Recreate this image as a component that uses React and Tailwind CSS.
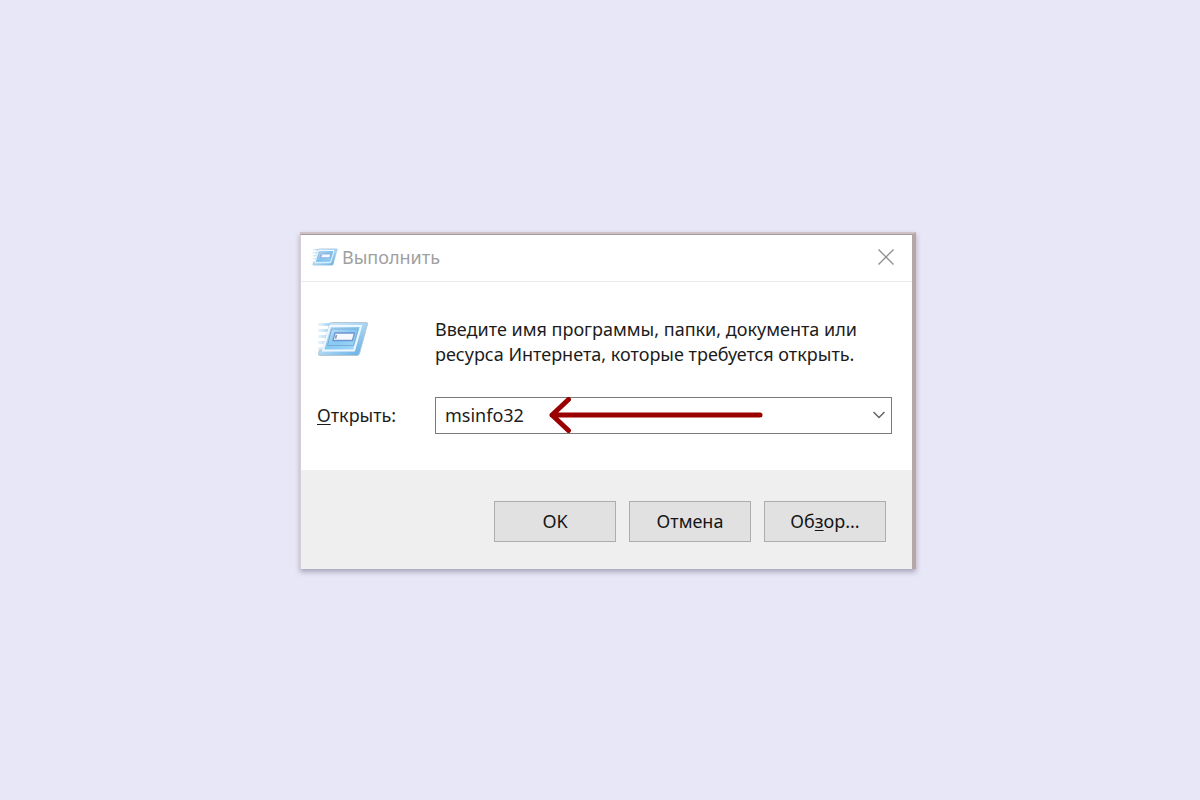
import React, { useState } from "react";

function RunIcon({ className, id }) {
  return (
    <svg className={className} viewBox="0 0 52 36" aria-hidden="true">
      <defs>
        <linearGradient id={`${id}-frame`} x1="0" y1="0" x2="1" y2="1">
          <stop offset="0" stopColor="#d9ebf8" />
          <stop offset="0.5" stopColor="#a9d5f4" />
          <stop offset="1" stopColor="#5aa9e2" />
        </linearGradient>
        <linearGradient id={`${id}-panel`} x1="0" y1="0" x2="1" y2="1">
          <stop offset="0" stopColor="#cfe5f6" />
          <stop offset="0.5" stopColor="#86c8f4" />
          <stop offset="1" stopColor="#aadcfb" />
        </linearGradient>
        <linearGradient id={`${id}-trail`} x1="0" y1="0" x2="1" y2="0">
          <stop offset="0" stopColor="#9fd0f3" stopOpacity="0.2" />
          <stop offset="1" stopColor="#8cc4ee" />
        </linearGradient>
      </defs>
      <g fill={`url(#${id}-trail)`}>
        <path d="M1 2h15v3H1zM1 8h13v3H1zM1 14h11v3H1zM1 20h9v3H1zM1 26h7v3H1z" />
      </g>
      <path
        d="M14.500 1.500H49.500Q51 1.500 50.500 3L42.500 32.500Q42 34.500 40 34.500H3Q1 34.500 1.500 32.500L2.500 29H6L12.500 3Q13 1.500 14.500 1.500Z"
        fill={`url(#${id}-frame)`}
        stroke="#b4c7d4"
        strokeWidth="1"
      />
      <path d="M13 5H44L37 29.500H6Z" fill={`url(#${id}-panel)`} stroke="#f1f8fd" strokeWidth="2" />
      <path d="M14.500 8H41L36.500 24.500H10.500Z" fill="none" stroke="#79add6" strokeWidth="1" />
      <path d="M18 12H37.500L35.500 19.500H16Z" fill="#f7f8fd" stroke="#6d95d0" strokeWidth="1.300" />
      <path d="M19.500 14L18.500 17.500" stroke="#8197ad" strokeWidth="1.500" />
    </svg>
  );
}

function DialogButton({ children }) {
  return (
    <button
      type="button"
      className="h-[41px] w-[122px] border border-[#adadad] bg-[#e1e1e1] text-lg leading-6 text-[#151515]"
    >
      {children}
    </button>
  );
}

function App() {
  const [command, setCommand] = useState("msinfo32");

  return (
    <main className="flex min-h-screen items-center justify-center bg-[#e8e7f7] pl-4 font-['Noto_Sans','Open_Sans',sans-serif] text-lg text-[#1c1c1c]">
      <div className="w-[616px] max-w-full border-t-2 border-r-2 border-t-[#cfbfc6] border-r-[#c0a59f] shadow-[0_3px_5px_rgba(70,65,95,0.4)]">
        <section
          role="dialog"
          aria-labelledby="run-title"
          className="border-t border-r-2 border-l border-t-[#a39c9f] border-r-[#b0a9aa] border-l-[#d8ced5] bg-white"
        >
          <header className="flex h-[47px] items-center border-b border-[#ebebeb] pr-[15px] pb-0.5 pl-[11px]">
            <RunIcon id="small" className="h-[18px] w-[26px]" />
            <h1 id="run-title" className="ml-1 flex-1 text-lg leading-6 text-[#a0a0a0]">
              Выполнить
            </h1>
            <button type="button" aria-label="Закрыть" className="p-0.5">
              <svg className="h-[18px] w-[18px]" viewBox="0 0 18 18" fill="none" stroke="#8c8c8c" strokeWidth="1.300">
                <path d="M1.500 1.500L16.500 16.500M16.500 1.500L1.500 16.500" />
              </svg>
            </button>
          </header>

          <div className="px-4 pt-[35px] pb-9">
            <div className="flex">
              <div className="w-[118px] shrink-0 pt-1">
                <RunIcon id="large" className="h-9 w-[52px]" />
              </div>
              <p className="flex-1 leading-[25px]">
                Введите имя программы, папки, документа или
                <br />
                ресурса Интернета, которые требуется открыть.
              </p>
            </div>

            <div className="mt-[30px] flex items-center">
              <label htmlFor="command" className="w-[118px] shrink-0 leading-6">
                <span className="underline underline-offset-2">О</span>ткрыть:
              </label>
              <div className="relative mr-1 flex h-[37px] flex-1 border border-[#7a7a7a] bg-white">
                <input
                  id="command"
                  type="text"
                  value={command}
                  onChange={(e) => setCommand(e.target.value)}
                  className="min-w-0 flex-1 px-[9px] leading-6 outline-none"
                />
                <button type="button" aria-label="Показать список" className="flex w-6 items-center justify-center">
                  <svg className="h-2 w-3" viewBox="0 0 12 8" fill="none" stroke="#606060" strokeWidth="1.400">
                    <path d="M0.500 1L6 6.500L11.500 1" />
                  </svg>
                </button>
                {/* red pointer to the typed command */}
                <svg
                  className="pointer-events-none absolute -top-px left-[113px] h-9 w-[214px]"
                  viewBox="0 0 214 36"
                  fill="none"
                  stroke="#9b0000"
                  strokeWidth="5"
                  strokeLinecap="round"
                  strokeLinejoin="round"
                  aria-hidden="true"
                >
                  <path d="M3 18H211M19.500 2.500L3 18L19.500 33.500" />
                </svg>
              </div>
            </div>
          </div>

          <footer className="flex justify-end gap-[13px] bg-[#efefef] pt-[31px] pr-[26px] pb-[27px]">
            <DialogButton>OK</DialogButton>
            <DialogButton>Отмена</DialogButton>
            <DialogButton>
              Об<span className="underline underline-offset-2">з</span>ор...
            </DialogButton>
          </footer>
        </section>
      </div>
    </main>
  );
}

export default App;
